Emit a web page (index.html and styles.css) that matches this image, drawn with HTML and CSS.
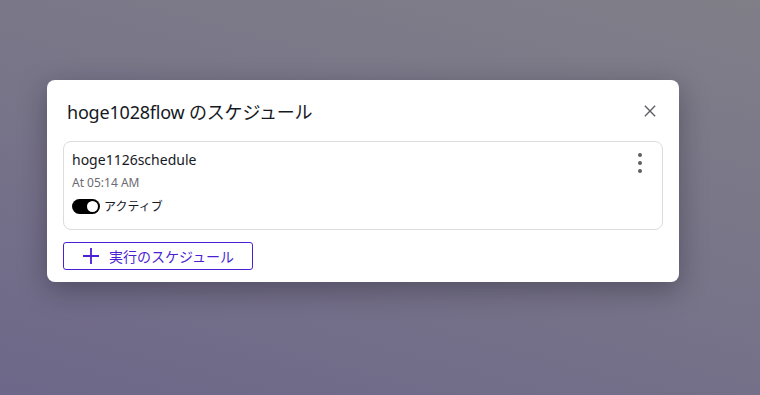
FILE: index.html
```html
<!DOCTYPE html>
<html lang="ja">
<head>
    <meta charset="UTF-8">
    <meta name="viewport" content="width=device-width, initial-scale=1.0">
    <title>スケジュール</title>
    <link rel="stylesheet" href="styles.css">
</head>
<body>
    <div class="overlay">
        <div class="modal">
            <div class="modal-header">
                <h2>hoge1028flow のスケジュール</h2>
                <button class="close" type="button" aria-label="閉じる">
                    <svg width="14" height="14" viewBox="0 0 14 14"><path d="M1 1L13 13M13 1L1 13" stroke="#5f5f66" stroke-width="1.6" fill="none"/></svg>
                </button>
            </div>

            <div class="card">
                <div class="card-body">
                    <div class="name">hoge1126schedule</div>
                    <div class="time">At 05:14 AM</div>
                    <label class="toggle-row">
                        <span class="toggle"><span class="knob"></span></span>
                        <span>アクティブ</span>
                    </label>
                </div>
                <button class="more" type="button" aria-label="メニュー">
                    <span></span><span></span><span></span>
                </button>
            </div>

            <button class="add" type="button">
                <svg width="16" height="16" viewBox="0 0 16 16"><path d="M8 0V16M0 8H16" stroke="#4b1fd6" stroke-width="1.8" fill="none"/></svg>
                実行のスケジュール
            </button>
        </div>
    </div>
</body>
</html>
```

FILE: styles.css
```css
body {
    margin: 0;
    height: 395px;
    font-family: "Noto Sans", "Noto Sans CJK JP", sans-serif;
    color: #16191f;
    background: linear-gradient(15deg, #6d6789 0%, #777389 45%, #807f88 100%);
}
.overlay {
    padding: 80px 0 0 47px;
}
.modal {
    width: 600px;
    padding: 0 16px 12px 16px;
    background-color: white;
    border-radius: 8px;
    box-shadow: 0 8px 28px rgba(20, 18, 30, 0.35);
}
.modal-header {
    display: flex;
    justify-content: space-between;
    align-items: center;
    height: 61px;
}
.modal-header h2 {
    margin: 0 0 0 4px;
    font-size: 18px;
    font-weight: 400;
    letter-spacing: -0.2px;
}
.close {
    border: none;
    background: none;
    padding: 0;
    margin-right: 7px;
    display: flex;
}
.close svg {
    width: 12px;
    height: 12px;
}
.card {
    display: flex;
    justify-content: space-between;
    border: 1px solid #dcdcdf;
    border-radius: 8px;
    height: 87px;
    padding: 0 20px 0 8px;
}
.card-body {
    padding-top: 8px;
}
.name {
    font-size: 14px;
    line-height: 20px;
}
.time {
    font-size: 12px;
    color: #6b6b72;
    margin-top: 5px;
    line-height: 16px;
}
.toggle-row {
    display: flex;
    align-items: center;
    gap: 4px;
    font-size: 12px;
    margin-top: 6px;
}
.toggle {
    width: 28px;
    height: 15px;
    border-radius: 8px;
    background-color: #000;
    display: flex;
    align-items: center;
    justify-content: flex-end;
    padding-right: 2px;
    box-sizing: border-box;
}
.knob {
    width: 11px;
    height: 11px;
    border-radius: 50%;
    background-color: white;
}
.more {
    border: none;
    background: none;
    padding: 0;
    margin-top: 11px;
    height: 20px;
    display: flex;
    flex-direction: column;
    justify-content: space-between;
    align-items: center;
}
.more span {
    width: 4px;
    height: 4px;
    border-radius: 50%;
    background-color: #5f5f66;
}
.add {
    margin-top: 12px;
    width: 190px;
    height: 28px;
    display: flex;
    align-items: center;
    gap: 10px;
    padding: 0 0 0 19px;
    border: 1px solid #4b1fd6;
    border-radius: 3px;
    background-color: white;
    color: #4b1fd6;
    font-family: "Noto Sans CJK JP", sans-serif;
    font-size: 14px;
}
```
